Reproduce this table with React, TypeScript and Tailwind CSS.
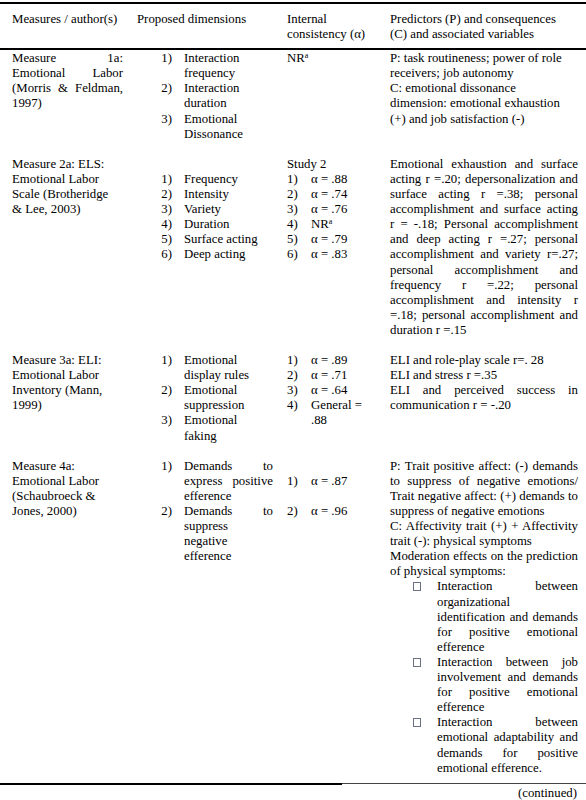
import React from 'react';

// Lines of a justified paragraph: every line but the last is stretched to the column edge
const P: React.FC<{ lines: string[] }> = ({ lines }) => (
  <>
    {lines.map((line, i) => (
      <div key={i} className={i < lines.length - 1 ? 'text-justify [text-align-last:justify]' : ''}>
        {line}
      </div>
    ))}
  </>
);

// Plain left-aligned lines
const L: React.FC<{ lines: string[] }> = ({ lines }) => (
  <>
    {lines.map((line, i) => (
      <div key={i}>{line}</div>
    ))}
  </>
);

const NR = () => (
  <span>
    NR<sup className="text-[8px]">a</sup>
  </span>
);

const Dim: React.FC<{ n: number; children: React.ReactNode }> = ({ n, children }) => (
  <div className="flex">
    <div className="w-[35px] shrink-0 text-right">{n})</div>
    <div className="ml-[12px] w-[89px]">{children}</div>
  </div>
);

const Alpha: React.FC<{ n: number; children: React.ReactNode }> = ({ n, children }) => (
  <div className="flex">
    <div className="w-[24px] shrink-0">{n})</div>
    <div className="w-[65px]">{children}</div>
  </div>
);

const Bullet: React.FC<{ lines: string[] }> = ({ lines }) => (
  <div className="flex">
    <div className="w-[47px] shrink-0 pl-[23px] pt-[3px]">
      <div className="h-[9px] w-[8px] border border-gray-500"></div>
    </div>
    <div className="w-[141px]">
      <P lines={lines} />
    </div>
  </div>
);

const Row: React.FC<{ cells: React.ReactNode[] }> = ({ cells }) => (
  <div className="grid grid-cols-[111px_136px_89px_188px] gap-x-[14px] pl-[12px] pb-[15.1px]">
    {cells.map((c, i) => (
      <div key={i}>{c}</div>
    ))}
  </div>
);

export default function App() {
  return (
    <div className="min-h-[800px] w-[586px] overflow-hidden bg-white font-['Liberation_Serif','Times_New_Roman',serif] text-[12.8px] leading-[15.1px] text-black">
      <div className="mt-[2px] h-[2px] bg-black"></div>

      <div className="grid grid-cols-[111px_136px_89px_188px] gap-x-[14px] pl-[12px] pt-[8px] pb-[6px]">
        <div>Measures / author(s)</div>
        <div>Proposed dimensions</div>
        <div>
          <div>Internal</div>
          <div>consistency (α)</div>
        </div>
        <div>
          <div>Predictors (P) and consequences</div>
          <div>(C) and associated variables</div>
        </div>
      </div>
      <div className="h-[2px] bg-black"></div>

      <div className="pt-[1px]">
        <Row
          cells={[
            <P lines={['Measure 1a:', 'Emotional Labor', '(Morris & Feldman,', '1997)']} />,
            <div>
              <Dim n={1}>Interaction frequency</Dim>
              <Dim n={2}>Interaction duration</Dim>
              <Dim n={3}>Emotional Dissonance</Dim>
            </div>,
            <NR />,
            <L
              lines={[
                'P: task routineness; power of role',
                'receivers; job autonomy',
                'C: emotional dissonance',
                'dimension: emotional exhaustion',
                '(+) and job satisfaction (-)',
              ]}
            />,
          ]}
        />

        <Row
          cells={[
            <L lines={['Measure 2a: ELS:', 'Emotional Labor', 'Scale (Brotheridge', '& Lee, 2003)']} />,
            <div className="pt-[15.1px]">
              <Dim n={1}>Frequency</Dim>
              <Dim n={2}>Intensity</Dim>
              <Dim n={3}>Variety</Dim>
              <Dim n={4}>Duration</Dim>
              <Dim n={5}>Surface acting</Dim>
              <Dim n={6}>Deep acting</Dim>
            </div>,
            <div>
              <div>Study 2</div>
              <Alpha n={1}>α = .88</Alpha>
              <Alpha n={2}>α = .74</Alpha>
              <Alpha n={3}>α = .76</Alpha>
              <Alpha n={4}>
                <NR />
              </Alpha>
              <Alpha n={5}>α = .79</Alpha>
              <Alpha n={6}>α = .83</Alpha>
            </div>,
            <P
              lines={[
                'Emotional exhaustion and surface',
                'acting r =.20; depersonalization and',
                'surface acting r =.38; personal',
                'accomplishment and surface acting',
                'r = -.18; Personal accomplishment',
                'and deep acting r =.27; personal',
                'accomplishment and variety r=.27;',
                'personal accomplishment and',
                'frequency r =.22; personal',
                'accomplishment and intensity r',
                '=.18; personal accomplishment and',
                'duration r =.15',
              ]}
            />,
          ]}
        />

        <Row
          cells={[
            <L lines={['Measure 3a: ELI:', 'Emotional Labor', 'Inventory (Mann,', '1999)']} />,
            <div>
              <Dim n={1}>Emotional display rules</Dim>
              <Dim n={2}>Emotional suppression</Dim>
              <Dim n={3}>Emotional faking</Dim>
            </div>,
            <div>
              <Alpha n={1}>α = .89</Alpha>
              <Alpha n={2}>α = .71</Alpha>
              <Alpha n={3}>α = .64</Alpha>
              <Alpha n={4}>General = .88</Alpha>
            </div>,
            <div>
              <L lines={['ELI and role-play scale r=. 28', 'ELI and stress r =.35']} />
              <P lines={['ELI and perceived success in', 'communication r = -.20']} />
            </div>,
          ]}
        />

        <Row
          cells={[
            <L lines={['Measure 4a:', 'Emotional Labor', '(Schaubroeck &', 'Jones, 2000)']} />,
            <div>
              <Dim n={1}>
                <P lines={['Demands to', 'express positive', 'efference']} />
              </Dim>
              <Dim n={2}>
                <P lines={['Demands to', 'suppress', 'negative', 'efference']} />
              </Dim>
            </div>,
            <div className="flex flex-col gap-y-[15.1px] pt-[15.1px]">
              <Alpha n={1}>α = .87</Alpha>
              <Alpha n={2}>α = .96</Alpha>
            </div>,
            <div>
              <P
                lines={[
                  'P: Trait positive affect: (-) demands',
                  'to suppress of negative emotions/',
                  'Trait negative affect: (+) demands to',
                  'suppress of negative emotions',
                ]}
              />
              <P lines={['C: Affectivity trait (+) + Affectivity', 'trait (-): physical symptoms']} />
              <P lines={['Moderation effects on the prediction', 'of physical symptoms:']} />
              <Bullet
                lines={[
                  'Interaction between',
                  'organizational',
                  'identification and demands',
                  'for positive emotional',
                  'efference',
                ]}
              />
              <Bullet
                lines={[
                  'Interaction between job',
                  'involvement and demands',
                  'for positive emotional',
                  'efference',
                ]}
              />
              <Bullet
                lines={[
                  'Interaction between',
                  'emotional adaptability and',
                  'demands for positive',
                  'emotional efference.',
                ]}
              />
            </div>,
          ]}
        />
      </div>

      <div className="-mt-[8px] flex items-center">
        <div className="h-[2px] w-[342px] bg-black"></div>
        <div className="h-[1px] flex-1 bg-[#444]"></div>
      </div>
      <div className="pt-[1px] pr-[9px] text-right">(continued)</div>
    </div>
  );
}
